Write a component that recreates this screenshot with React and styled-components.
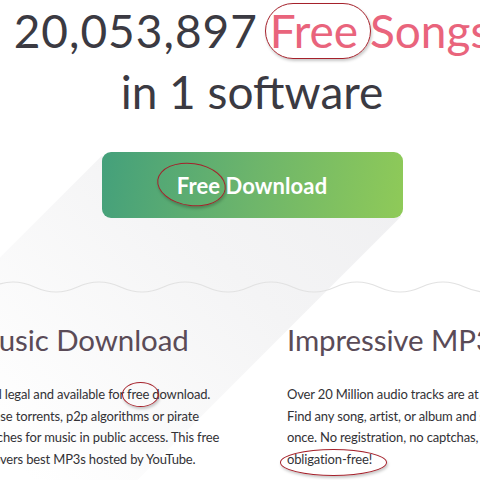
import styled, { createGlobalStyle } from "styled-components";

const ink = "#3b3a42";
const pink = "#e9647c";
const mark = "#a5212b";

const GlobalStyle = createGlobalStyle`
  html, body {
    margin: 0;
    background: #ffffff;
  }
  body {
    font-family: Lato, "Open Sans", sans-serif;
    overflow: hidden;
  }
`;

const Page = styled.div`
  position: relative;
  width: 480px;
  height: 480px;
  overflow: hidden;
  background: #fff;
`;

const Stage = styled.div`
  width: 960px;
  margin-left: -228px;
  display: flex;
  flex-direction: column;
  align-items: center;
`;

const Title = styled.h1`
  margin: 0;
  font-weight: 400;
  font-size: 46px;
  line-height: 61px;
  color: ${ink};
  text-align: center;
  white-space: nowrap;
`;

const Count = styled.span`
  letter-spacing: 1px;
`;

const Pink = styled.span`
  color: ${pink};
`;

const ButtonZone = styled.div`
  position: relative;
  margin-top: 30px;
`;

const LongShadow = styled.div`
  position: absolute;
  left: -400px;
  top: 0;
  width: 702px;
  height: 466px;
  background: linear-gradient(225deg, #efeff1 0%, #f4f4f5 25%, rgba(255, 255, 255, 0) 60%);
  clip-path: polygon(400px 4px, 700px 64px, 300px 464px, 0 404px);
`;

const Button = styled.button`
  position: relative;
  width: 301px;
  height: 66px;
  border: 0;
  border-radius: 9px;
  background: linear-gradient(100deg, #44a07b 0%, #6db56b 50%, #8fca58 100%);
  color: #fff;
  font-family: Lato, sans-serif;
  font-weight: 700;
  font-size: 22px;
  letter-spacing: 0.1px;
  cursor: pointer;
`;

const Wave = styled.svg`
  position: relative;
  display: block;
  margin-top: 61px;
  width: 480px;
  height: 16px;
  margin-left: 228px;
  align-self: flex-start;
`;

const Columns = styled.div`
  position: relative;
  z-index: 1;
  display: grid;
  grid-template-columns: minmax(0, 1fr) minmax(0, 1fr);
  column-gap: 78px;
  width: 680px;
  margin-left: -8px;
  margin-top: 25px;
`;

const Column = styled.div`
  display: flex;
  flex-direction: column;
  min-width: 0;
`;

const Heading = styled.h2`
  margin: 0;
  font-weight: 400;
  font-size: 29.5px;
  line-height: 40px;
  color: #5a4b57;
  white-space: nowrap;
  letter-spacing: -0.1px;
`;

const Body = styled.p`
  margin: 24px 0 0;
  font-size: 13px;
  line-height: 21.6px;
  color: #333236;
  white-space: nowrap;
  letter-spacing: -0.15px;
`;

const Ring = styled.div`
  position: absolute;
  z-index: 2;
  border: 1.6px solid ${mark};
  border-radius: ${(p) => p.$radius || "50%"};
  box-shadow: 1px 2px 3px rgba(0, 0, 0, 0.22);
  pointer-events: none;
`;

function WaveLine() {
  let d = "M-30 13";
  for (let x = -30; x < 520; x += 86) {
    d += ` C${x + 21} 13, ${x + 22} 3, ${x + 43} 3 C${x + 64} 3, ${x + 65} 13, ${x + 86} 13`;
  }
  return (
    <Wave viewBox="0 0 480 16">
      <path d={d} fill="none" stroke="#e2e2e2" strokeWidth="1.2" />
    </Wave>
  );
}

export default function App() {
  return (
    <>
      <GlobalStyle />
      <Page>
        <Stage>
          <Title>
            <Count>20,053,897</Count> <Pink>Free Songs</Pink>
            <br />
            in 1 software
          </Title>
          <ButtonZone>
            <LongShadow />
            <Button>Free Download</Button>
          </ButtonZone>
          <WaveLine />
          <Columns>
            <Column>
              <Heading>Free Music Download</Heading>
              <Body>
                The tracks are all legal and available for free download.
                <br />
                Note: we don't use torrents, p2p algorithms or pirate
                <br />
                websites. It searches for music in public access. This free
                <br />
                A software discovers best MP3s hosted by YouTube.
              </Body>
            </Column>
            <Column>
              <Heading>Impressive MP3 Library</Heading>
              <Body>
                Over 20 Million audio tracks are at your fingertips.
                <br />
                Find any song, artist, or album and save it at
                <br />
                once. No registration, no captchas, completely
                <br />
                obligation-free!
              </Body>
            </Column>
          </Columns>
        </Stage>
        <Ring $radius="28px" style={{ left: 265, top: 3, width: 104, height: 54 }} />
        <Ring style={{ left: 157, top: 163, width: 67, height: 41, transform: "rotate(8deg)" }} />
        <Ring style={{ left: 122, top: 382, width: 35, height: 23 }} />
        <Ring style={{ left: 280, top: 449, width: 105, height: 25 }} />
      </Page>
    </>
  );
}
